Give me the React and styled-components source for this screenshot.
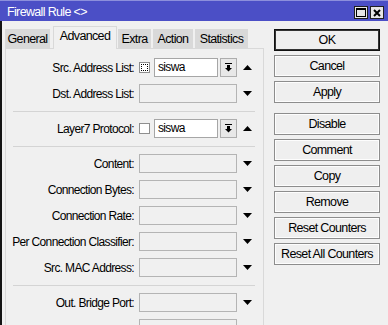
import React from "react";
import styled, { createGlobalStyle } from "styled-components";

const FONT = '"Liberation Sans Narrow", "Arial Narrow", "Liberation Sans", Arial, sans-serif';

const GlobalStyle = createGlobalStyle`
  html, body {
    margin: 0;
    padding: 0;
    background: #f0f0f0;
  }
  body {
    font-family: ${FONT};
    font-size: 12px;
    letter-spacing: -0.65px;
    color: #000;
  }
`;

const Window = styled.div`
  width: 388px;
  height: 325px;
  display: flex;
  flex-direction: column;
  overflow: hidden;
  background: #4b4fc6;
`;

const TitleBar = styled.div`
  height: 21px;
  flex: none;
  display: flex;
  align-items: center;
  padding: 0 4px 0 7px;
  box-sizing: border-box;
  border-top: 1px solid #8c8fdc;
  color: #fff;
  font-size: 12.5px;
`;

const Title = styled.span`
  flex: 1;
  padding-top: 1px;
`;

const TitleButtons = styled.div`
  display: flex;
  gap: 2px;
  margin-top: 3px;
`;

const TitleButton = styled.div`
  width: 14px;
  height: 13px;
  box-sizing: border-box;
  border: 1px solid #202020;
  background: #e6e6e6;
  display: flex;
  align-items: center;
  justify-content: center;
`;

const Body = styled.div`
  flex: 1;
  display: flex;
  gap: 10px;
  background: #f0f0f0;
  border-left: 2px solid #141414;
  padding-left: 3px;
`;

const LeftCol = styled.div`
  width: 259px;
  display: flex;
  flex-direction: column;
`;

const TabRow = styled.div`
  display: flex;
  align-items: flex-end;
  gap: 2px;
  height: 27px;
  position: relative;
  z-index: 1;
`;

const Tab = styled.div`
  width: ${(p) => p.$w}px;
  box-sizing: border-box;
  text-align: center;
  white-space: nowrap;
  height: ${(p) => (p.$active ? 23 : 19)}px;
  line-height: 19px;
  font-size: 12.5px;
  background: ${(p) => (p.$active ? "#f0f0f0" : "#d9d9d9")};
  border: 1px solid #d9d9d9;
  border-bottom: none;
  margin: ${(p) => (p.$active ? "0 -1px -1px 1px" : "0")};
`;

const Panel = styled.div`
  flex: 1;
  box-sizing: border-box;
  border: 1px solid #d9d9d9;
  border-bottom: none;
  background: #f0f0f0;
  padding-top: 9px;
  display: flex;
  flex-direction: column;
`;

const Row = styled.div`
  display: flex;
  align-items: center;
  height: 19px;
  margin-bottom: 7px;
`;

const Label = styled.div`
  width: 128px;
  flex: none;
  text-align: right;
  margin-right: 5px;
  white-space: nowrap;
`;

const Separator = styled.div`
  height: 1px;
  background: #d4d4d4;
  margin: 1px 8px 7px 7px;
`;

const Check = styled.div`
  width: 11px;
  height: 11px;
  box-sizing: border-box;
  border: 1px solid #8f8f8f;
  background: #fff;
  margin-right: 4px;
  padding: 1px;

  &::after {
    content: "";
    display: ${(p) => (p.$focus ? "block" : "none")};
    width: 100%;
    height: 100%;
    box-sizing: border-box;
    border: 1px dotted #000;
  }
`;

const TextBox = styled.div`
  width: ${(p) => p.$w}px;
  height: 19px;
  box-sizing: border-box;
  border: 1px solid ${(p) => (p.$disabled ? "#b4b4b4" : "#a6a6a6")};
  background: ${(p) => (p.$disabled ? "#f0f0f0" : "#fff")};
  padding-left: 3px;
  line-height: 17px;
`;

const DropButton = styled.div`
  width: 17px;
  height: 19px;
  margin-left: 2px;
  box-sizing: border-box;
  border: 1px solid #adadad;
  background: #e8e8e8;
  display: flex;
  align-items: center;
  justify-content: center;
`;

const Arrow = styled.div`
  margin-left: ${(p) => p.$gap}px;
  display: flex;
  align-items: center;
`;

const RightCol = styled.div`
  width: 106px;
  padding-top: 8px;
  display: flex;
  flex-direction: column;
`;

const Button = styled.div`
  height: 22px;
  box-sizing: border-box;
  border: 1px solid ${(p) => (p.$default ? "#111" : "#8d8d8d")};
  box-shadow: ${(p) => (p.$default ? "inset 0 0 0 1px #333" : "inset 0 0 0 1px #fdfdfd")};
  background: #efefef;
  text-align: center;
  white-space: nowrap;
  line-height: 20px;
  font-size: 12.5px;
  margin-top: ${(p) => p.$mt}px;
`;

const DownBar = () => (
  <svg width="7" height="9" viewBox="0 0 7 9">
    <rect x="0" y="0" width="7" height="1" fill="#000" />
    <rect x="2" y="2" width="3" height="3" fill="#000" />
    <path d="M0 5 H7 L3.5 8.5 Z" fill="#000" />
  </svg>
);

const Triangle = ({ up }) => (
  <svg width="9" height="5" viewBox="0 0 9 5">
    <path d={up ? "M0 5 L4.5 0 L9 5 Z" : "M0 0 L9 0 L4.5 5 Z"} fill="#000" />
  </svg>
);

const ListField = ({ focus }) => (
  <>
    <Check $focus={focus} />
    <TextBox $w={64}>siswa</TextBox>
    <DropButton>
      <DownBar />
    </DropButton>
    <Arrow $gap={6}>
      <Triangle up />
    </Arrow>
  </>
);

const EmptyField = () => (
  <>
    <TextBox $w={98} $disabled />
    <Arrow $gap={6}>
      <Triangle />
    </Arrow>
  </>
);

const tabs = [
  { name: "General", w: 45 },
  { name: "Advanced", w: 64, active: true },
  { name: "Extra", w: 33 },
  { name: "Action", w: 40 },
  { name: "Statistics", w: 53 },
];

const middleRows = [
  "Content:",
  "Connection Bytes:",
  "Connection Rate:",
  "Per Connection Classifier:",
  "Src. MAC Address:",
];

const buttons = [
  { label: "OK", def: true, mt: 0 },
  { label: "Cancel", mt: 4 },
  { label: "Apply", mt: 4 },
  { label: "Disable", mt: 10 },
  { label: "Comment", mt: 4 },
  { label: "Copy", mt: 4 },
  { label: "Remove", mt: 4 },
  { label: "Reset Counters", mt: 4 },
  { label: "Reset All Counters", mt: 4 },
];

export default function App() {
  return (
    <>
      <GlobalStyle />
      <Window>
        <TitleBar>
          <Title>Firewall Rule &lt;&gt;</Title>
          <TitleButtons>
            <TitleButton>
              <svg width="10" height="9" viewBox="0 0 10 9">
                <rect x="0.5" y="0.5" width="9" height="8" fill="none" stroke="#000" />
                <rect x="0" y="0" width="10" height="2" fill="#000" />
              </svg>
            </TitleButton>
            <TitleButton>
              <svg width="8" height="8" viewBox="0 0 8 8">
                <path d="M1 1 L7 7 M7 1 L1 7" stroke="#000" strokeWidth="2" />
              </svg>
            </TitleButton>
          </TitleButtons>
        </TitleBar>
        <Body>
          <LeftCol>
            <TabRow>
              {tabs.map((t) => (
                <Tab key={t.name} $w={t.w} $active={t.active}>
                  {t.name}
                </Tab>
              ))}
            </TabRow>
            <Panel>
              <Row>
                <Label>Src. Address List:</Label>
                <ListField focus />
              </Row>
              <Row>
                <Label>Dst. Address List:</Label>
                <EmptyField />
              </Row>
              <Separator />
              <Row>
                <Label>Layer7 Protocol:</Label>
                <ListField />
              </Row>
              <Separator />
              {middleRows.map((r) => (
                <Row key={r}>
                  <Label>{r}</Label>
                  <EmptyField />
                </Row>
              ))}
              <Separator />
              <Row>
                <Label>Out. Bridge Port:</Label>
                <EmptyField />
              </Row>
              <Row>
                <Label />
                <TextBox $w={98} $disabled />
              </Row>
            </Panel>
          </LeftCol>
          <RightCol>
            {buttons.map((b) => (
              <Button key={b.label} $default={b.def} $mt={b.mt}>
                {b.label}
              </Button>
            ))}
          </RightCol>
        </Body>
      </Window>
    </>
  );
}
